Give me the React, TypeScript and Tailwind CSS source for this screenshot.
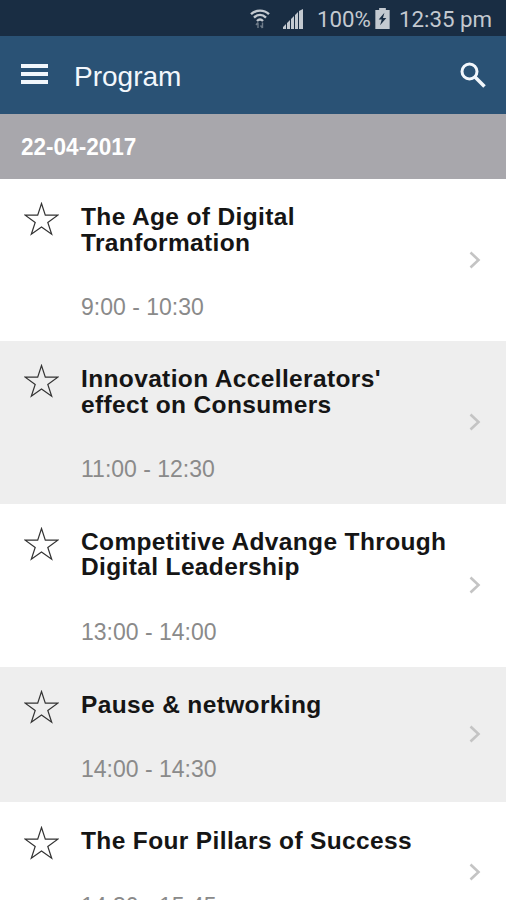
import clsx from 'clsx';

interface Session {
  title: string[];
  time: string;
  height: string;
}

const sessions: Session[] = [
  { title: ['The Age of Digital', 'Tranformation'], time: '9:00 - 10:30', height: 'h-[162px]' },
  { title: ["Innovation Accellerators'", 'effect on Consumers'], time: '11:00 - 12:30', height: 'h-[162.5px]' },
  { title: ['Competitive Advange Through', 'Digital Leadership'], time: '13:00 - 14:00', height: 'h-[163px]' },
  { title: ['Pause & networking'], time: '14:00 - 14:30', height: 'h-[135.5px]' },
  { title: ['The Four Pillars of Success'], time: '14:30 - 15:45', height: 'h-[138px] pt-px' },
];

function StatusBar() {
  return (
    <div className="flex h-9 shrink-0 items-center justify-end bg-[#192d43] pt-[3px] pr-[13px] font-[Roboto] text-[22.3px] text-[#c3c9d0]">
      {/* Wifi */}
      <svg className="mr-[13px] mb-0.5 h-5 w-5 shrink-0" viewBox="0 0 20 20" fill="none" stroke="currentColor" strokeWidth="2.4">
        <path d="M1 5.2C6 .4 14 .4 19 5.2" />
        <path d="M4 8.6c3.6-3.4 8.4-3.4 12 0" />
        <path d="M7 12c1.8-1.8 4.2-1.8 6 0" />
        <path d="M8 19v-5.5M6 16l2-2.5M12.5 13.5V19M10.5 16.5l2 2.5" strokeWidth="1.4" opacity=".5" />
      </svg>
      {/* Signal */}
      <svg className="mr-[14px] mb-0.5 h-5 w-5 shrink-0" viewBox="0 0 20 20" fill="currentColor">
        <path d="M0 20v-2l3-3v5zM4 20v-6l3-3v9zM8 20V10l3-3v13zM12 20V6l3-3v17zM16 20V2l4-2v20z" />
      </svg>
      <span className="w-[54px] shrink-0 whitespace-nowrap">100%</span>
      {/* Battery */}
      <svg className="mr-[9px] mb-0.5 ml-1 h-[21px] w-[15px] shrink-0" viewBox="0 0 15 22">
        <path d="M4 0h7v2h4v20H0V2h4z" fill="currentColor" />
        <path d="M9.5 5 3.5 12h3.2L5 18l6.5-7.5H8z" fill="#192d43" />
      </svg>
      <span className="w-[94px] shrink-0 whitespace-nowrap">12:35 pm</span>
    </div>
  );
}

function Header() {
  return (
    <header className="flex h-[78px] shrink-0 items-center bg-[#2a5275] pr-5 pl-[21px] text-[#f2f7fc]">
      <svg className="-mt-0.5 h-5 w-[27px]" viewBox="0 0 27 20" fill="currentColor">
        <path d="M0 0h27v4H0zM0 8h27v4H0zM0 16h27v4H0z" />
      </svg>
      <h1 className="mt-[3px] ml-[26px] text-[28px] leading-8">Program</h1>
      <svg className="ml-auto h-[26px] w-[26px]" viewBox="0 0 26 26" fill="none" stroke="currentColor" strokeWidth="3">
        <circle cx="9.5" cy="9.5" r="7.5" />
        <path d="m15 15 9.5 9.5" strokeWidth="3.6" />
      </svg>
    </header>
  );
}

function SessionRow({ session, shaded }: { session: Session; shaded: boolean }) {
  return (
    <li className={clsx('flex shrink-0', session.height, shaded ? 'bg-[#eeeeee]' : 'bg-white')}>
      <svg className="mt-[23px] ml-6 h-[34px] w-[35px] shrink-0" viewBox="0 0 35 34" fill="none" stroke="#333" strokeWidth="1.2">
        <path d="M17.5 1.5 21.3 13.2H33.8L23.8 20.4 27.7 32.2 17.5 24.9 7.3 32.2 11.2 20.4 1.2 13.2H13.7z" />
      </svg>
      <div className="ml-[22px] flex-1">
        <h2 className="mt-[25px] text-[24.5px] leading-[25.5px] font-bold tracking-[0.36px] whitespace-nowrap text-[#151515]">
          {session.title.map((line) => (
            <span key={line} className="block">{line}</span>
          ))}
        </h2>
        <p className="mt-[39px] text-[23px] leading-[26px] whitespace-nowrap text-[#8a8a8a]">{session.time}</p>
      </div>
      <svg className="mr-[25px] h-[18px] w-3 shrink-0 self-center" viewBox="0 0 12 18" fill="none" stroke="#c4c4c4" strokeWidth="2.6">
        <path d="m1.5 1.5 8 7.5-8 7.5" />
      </svg>
    </li>
  );
}

export default function App() {
  return (
    <div className="flex h-[900px] w-[506px] flex-col overflow-hidden bg-white font-['Liberation_Sans',sans-serif]">
      <StatusBar />
      <Header />
      <div className="flex h-[65px] shrink-0 items-center bg-[#a8a7ac] pt-0.5 pl-[21px] text-[24.5px] font-bold text-white">
        <span className="origin-left scale-x-[0.92]">22-04-2017</span>
      </div>
      <ul>
        {sessions.map((session, i) => (
          <SessionRow key={session.time} session={session} shaded={i % 2 === 1} />
        ))}
      </ul>
    </div>
  );
}
